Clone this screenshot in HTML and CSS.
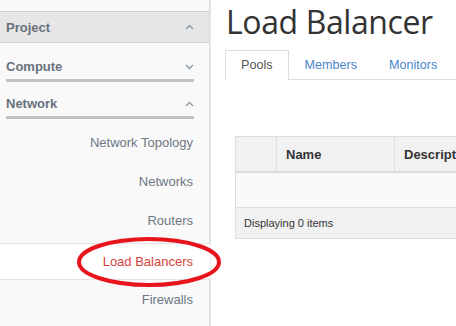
FILE: index.html
```html
<!DOCTYPE html>
<html>
<head>
<meta charset="utf-8">
<link rel="stylesheet" href="styles.css">
</head>
<body>
<div class="page">
  <nav class="sidebar">
    <div class="panel-head">
      <span>Project</span>
      <svg class="caret" width="9" height="6" viewBox="0 0 9 6"><path d="M1 5 L4.5 1.5 L8 5" fill="none" stroke="#8a97a6" stroke-width="1.3"/></svg>
    </div>
    <div class="group">
      <div class="group-title">
        <span>Compute</span>
        <svg class="caret" width="9" height="6" viewBox="0 0 9 6"><path d="M1 1 L4.5 4.5 L8 1" fill="none" stroke="#8a97a6" stroke-width="1.3"/></svg>
      </div>
      <div class="group-bar"></div>
    </div>
    <div class="group second">
      <div class="group-title">
        <span>Network</span>
        <svg class="caret" width="9" height="6" viewBox="0 0 9 6"><path d="M1 5 L4.5 1.5 L8 5" fill="none" stroke="#8a97a6" stroke-width="1.3"/></svg>
      </div>
      <div class="group-bar"></div>
    </div>
    <ul class="items">
      <li class="item">Network Topology</li>
      <li class="item">Networks</li>
      <li class="item">Routers</li>
      <li class="item active">Load Balancers
        <svg class="circle" width="146" height="52" viewBox="0 0 146 52"><ellipse cx="73" cy="26" rx="70" ry="23" fill="none" stroke="#e8141c" stroke-width="4"/></svg>
      </li>
      <li class="item">Firewalls</li>
    </ul>
  </nav>
  <main class="main">
    <h1 class="title">Load Balancer</h1>
    <div class="tabs">
      <div class="tab current">Pools</div>
      <div class="tab">Members</div>
      <div class="tab">Monitors</div>
    </div>
    <div class="table">
      <div class="row head">
        <div class="cell check"></div>
        <div class="cell name">Name</div>
        <div class="cell desc">Description</div>
      </div>
      <div class="row empty"></div>
      <div class="row foot">Displaying 0 items</div>
    </div>
  </main>
</div>
</body>
</html>
```
FILE: styles.css
```css
html, body {
  margin: 0;
  padding: 0;
  background: #fff;
  overflow: hidden;
}
.page {
  display: flex;
  width: 456px;
  height: 326px;
  font-family: "Liberation Sans", Arial, sans-serif;
}
.sidebar {
  width: 209px;
  flex: none;
  background: #f9f9f9;
  border-right: 1px solid #dcdcdc;
  box-shadow: 1px 0 1px #ececec;
  padding-top: 11px;
  box-sizing: content-box;
}
.panel-head {
  height: 30px;
  background: #e6e6e6;
  border-top: 1px solid #cfcfcf;
  border-bottom: 1px solid #cfcfcf;
  display: flex;
  align-items: center;
  justify-content: space-between;
  padding: 0 15px 0 6px;
  font-size: 13px;
  font-weight: bold;
  color: #68717c;
}
.group {
  padding: 11px 15px 0 6px;
}
.group.second {
  padding-top: 9px;
}
.group-title {
  display: flex;
  align-items: center;
  justify-content: space-between;
  height: 25px;
  font-size: 13px;
  font-weight: bold;
  color: #68717c;
}
.group-bar {
  height: 3px;
  background: #c2c2c2;
}
.caret {
  display: block;
}
.items {
  list-style: none;
  margin: 0;
  padding: 4px 0 0;
}
.item {
  position: relative;
  height: 39px;
  line-height: 39px;
  text-align: right;
  padding-right: 16px;
  font-size: 13px;
  color: #6c7784;
}
.item.active {
  background: #fff;
  color: #d9413d;
  border-top: 1px solid #e4e4e4;
  border-bottom: 1px solid #e4e4e4;
  margin: 3px -1px 0 0;
  padding-right: 17px;
  height: 35px;
  line-height: 36px;
}
.circle {
  position: absolute;
  left: 76px;
  top: -8px;
}
.main {
  flex: 1;
  padding-left: 15px;
  min-width: 0;
}
.title {
  margin: 0;
  padding: 2px 0 0 1px;
  font-family: "Open Sans", sans-serif;
  font-weight: normal;
  font-size: 32px;
  line-height: 40px;
  color: #333;
  letter-spacing: -0.4px;
}
.tabs {
  display: flex;
  margin-top: 8px;
  border-bottom: 1px solid #ddd;
  height: 29px;
}
.tab {
  padding: 0 15px;
  line-height: 28px;
  font-size: 12.6px;
  color: #4a86c8;
  border: 1px solid transparent;
  border-bottom: none;
}
.tab.current {
  color: #555;
  background: #fff;
  border-color: #ddd;
  margin-bottom: -1px;
  height: 29px;
}
.table {
  margin: 56px 0 0 10px;
  border: 1px solid #ddd;
  border-right: none;
  font-size: 13px;
  color: #333;
}
.row {
  display: flex;
}
.head {
  height: 34px;
  background: #f1f1f1;
  border-bottom: 2px solid #ddd;
  font-weight: bold;
}
.cell {
  display: flex;
  align-items: center;
  padding-left: 9px;
  white-space: nowrap;
  box-sizing: border-box;
}
.check {
  width: 41px;
  flex: none;
  border-right: 1px solid #ddd;
}
.name {
  width: 118px;
  flex: none;
  border-right: 1px solid #ddd;
}
.empty {
  height: 34px;
  background: #f9f9f9;
  border-bottom: 1px solid #ddd;
}
.foot {
  height: 30px;
  align-items: center;
  padding-left: 8px;
  background: #f1f1f1;
  font-size: 11px;
  color: #333;
}
```
